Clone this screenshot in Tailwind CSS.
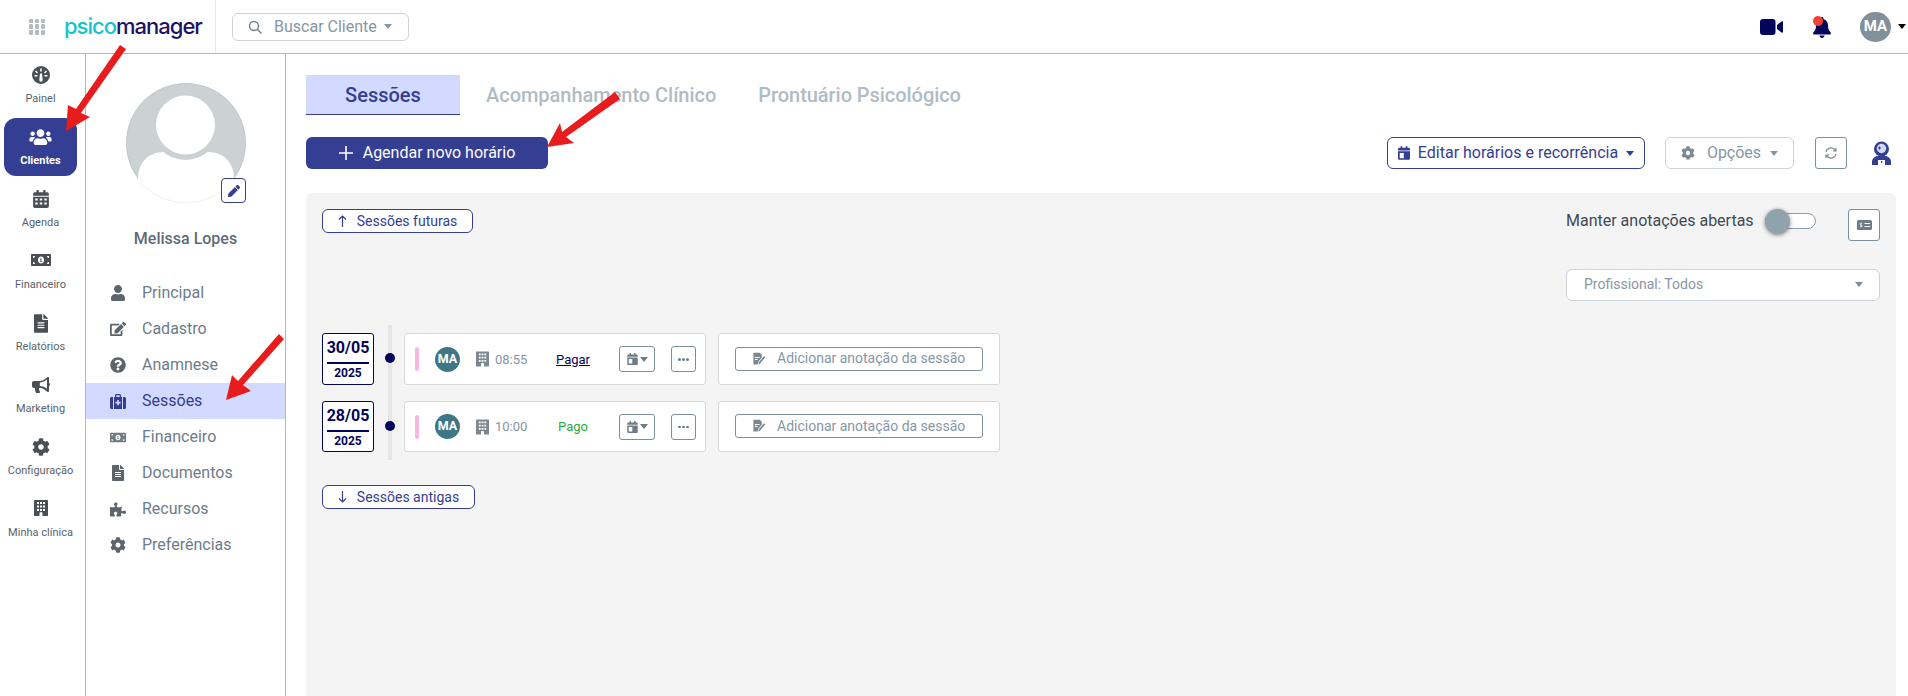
<!DOCTYPE html>
<html lang="pt-BR">
<head>
  <meta charset="UTF-8" />
  <meta name="viewport" content="width=device-width, initial-scale=1.0" />
  <title>PsicoManager</title>
  <script src="https://cdn.jsdelivr.net/npm/@tailwindcss/browser@4"></script>
</head>
<body class="bg-white font-['Roboto',sans-serif] overflow-hidden">

  <!-- Icones -->
  <svg class="hidden">
    <symbol id="i-user" viewBox="0 0 448 512"><path d="M224 256c70.7 0 128-57.3 128-128S294.7 0 224 0 96 57.3 96 128s57.3 128 128 128zm89.6 32h-16.7c-22.2 10.2-46.9 16-72.9 16s-50.6-5.8-72.9-16h-16.7C60.2 288 0 348.2 0 422.4V464c0 26.5 21.5 48 48 48h352c26.5 0 48-21.5 48-48v-41.6c0-74.2-60.2-134.4-134.4-134.4z"/></symbol>
    <symbol id="i-edit" viewBox="0 0 576 512"><path d="M402.6 83.2l90.2 90.2c3.8 3.8 3.8 10 0 13.8L274.4 405.6l-92.8 10.3c-12.4 1.4-22.9-9.1-21.5-21.5l10.3-92.8L388.8 83.2c3.8-3.8 10-3.8 13.8 0zm162-22.9l-48.8-48.8c-15.2-15.2-39.9-15.2-55.2 0l-35.4 35.4c-3.8 3.8-3.8 10 0 13.8l90.2 90.2c3.8 3.8 10 3.8 13.8 0l35.4-35.4c15.2-15.3 15.2-40 0-55.2zM384 346.2V448H64V128h229.8c3.2 0 6.2-1.3 8.5-3.5l40-40c7.6-7.6 2.2-20.5-8.5-20.5H48C21.5 64 0 85.5 0 112v352c0 26.5 21.5 48 48 48h352c26.5 0 48-21.5 48-48V306.2c0-10.7-12.9-16-20.5-8.5l-40 40c-2.2 2.3-3.5 5.3-3.5 8.5z"/></symbol>
    <symbol id="i-question" viewBox="0 0 512 512"><path d="M504 256c0 136.997-111.043 248-248 248S8 392.997 8 256C8 119.083 119.043 8 256 8s248 111.083 248 248zM262.655 90c-54.497 0-89.255 22.957-116.549 63.758-3.536 5.286-2.353 12.415 2.715 16.258l34.699 26.31c5.205 3.947 12.621 3.008 16.665-2.122 17.864-22.658 30.113-35.797 57.303-35.797 20.429 0 45.698 13.148 45.698 32.958 0 14.976-12.363 22.667-32.534 33.976C247.128 238.528 216 254.941 216 296v4c0 6.627 5.373 12 12 12h56c6.627 0 12-5.373 12-12v-1.333c0-28.462 83.186-29.647 83.186-106.667 0-58.002-60.165-102-116.531-102zM256 338c-25.365 0-46 20.635-46 46 0 25.364 20.635 46 46 46s46-20.636 46-46c0-25.365-20.635-46-46-46z"/></symbol>
    <symbol id="i-cog" viewBox="0 0 512 512"><path d="M487.4 315.7l-42.6-24.6c4.3-23.2 4.3-47 0-70.2l42.6-24.6c4.9-2.8 7.1-8.6 5.5-14-11.1-35.6-30-67.8-54.7-94.6-3.8-4.1-10-5.1-14.8-2.3L380.8 110c-17.9-15.4-38.5-27.3-60.8-35.1V25.8c0-5.6-3.9-10.5-9.4-11.7-36.7-8.2-74.3-7.8-109.2 0-5.5 1.2-9.4 6.1-9.4 11.7V75c-22.2 7.9-42.8 19.8-60.8 35.1L88.7 85.5c-4.9-2.8-11-1.9-14.8 2.3-24.7 26.7-43.6 58.9-54.7 94.6-1.7 5.4.6 11.2 5.5 14L67.3 221c-4.3 23.2-4.3 47 0 70.2l-42.6 24.6c-4.9 2.8-7.1 8.6-5.5 14 11.1 35.6 30 67.8 54.7 94.6 3.8 4.1 10 5.1 14.8 2.3l42.6-24.6c17.9 15.4 38.5 27.3 60.8 35.1v49.2c0 5.6 3.9 10.5 9.4 11.7 36.7 8.2 74.3 7.8 109.2 0 5.5-1.2 9.4-6.1 9.4-11.7v-49.2c22.2-7.9 42.8-19.8 60.8-35.1l42.6 24.6c4.9 2.8 11 1.9 14.8-2.3 24.7-26.7 43.6-58.9 54.7-94.6 1.5-5.5-.7-11.3-5.6-14.1zM256 336c-44.1 0-80-35.9-80-80s35.9-80 80-80 80 35.9 80 80-35.9 80-80 80z"/></symbol>
    <symbol id="i-file" viewBox="0 0 384 512"><path d="M224 136V0H24C10.7 0 0 10.7 0 24v464c0 13.3 10.7 24 24 24h336c13.3 0 24-10.7 24-24V160H248c-13.2 0-24-10.8-24-24zm64 236c0 6.6-5.4 12-12 12H108c-6.6 0-12-5.4-12-12v-8c0-6.6 5.4-12 12-12h168c6.6 0 12 5.4 12 12v8zm0-64c0 6.6-5.4 12-12 12H108c-6.6 0-12-5.4-12-12v-8c0-6.6 5.4-12 12-12h168c6.6 0 12 5.4 12 12v8zm0-72v8c0 6.6-5.4 12-12 12H108c-6.6 0-12-5.4-12-12v-8c0-6.6 5.4-12 12-12h168c6.6 0 12 5.4 12 12zm96-114.1v6.1H256V0h6.1c6.4 0 12.5 2.5 17 7l97.9 98c4.5 4.5 7 10.6 7 16.9z"/></symbol>
    <symbol id="i-pencil" viewBox="0 0 512 512"><path d="M497.9 142.1l-46.1 46.1c-4.7 4.7-12.3 4.7-17 0l-111-111c-4.7-4.7-4.7-12.3 0-17l46.1-46.1c18.7-18.7 49.1-18.7 67.9 0l60.1 60.1c18.8 18.7 18.8 49.1 0 67.9zM284.2 99.8L21.6 362.4.4 483.9c-2.9 16.4 11.4 30.6 27.8 27.8l121.5-21.3 262.6-262.6c4.7-4.7 4.7-12.3 0-17l-111-111c-4.8-4.7-12.4-4.7-17.1 0z"/></symbol>
    <symbol id="i-puzzle" viewBox="0 0 576 512"><path d="M519.442 288.651c-41.519 0-59.5 31.593-82.058 31.593C377.409 320.244 432 144 432 144s-196.288 80-196.288-3.297c0-35.827 36.288-46.25 36.288-85.985C272 19.216 243.885 0 210.539 0c-34.654 0-66.366 18.891-66.366 56.346 0 41.364 31.711 59.277 31.711 81.75C175.885 207.719 0 166.758 0 166.758v333.237s178.635 41.047 178.635-28.662c0-22.473-40-40.107-40-81.471 0-37.456 29.25-56.346 63.577-56.346 33.673 0 61.788 19.216 61.788 54.717 0 39.735-36.288 50.158-36.288 85.985 0 60.803 129.675 25.73 181.23 25.73 0 0-34.725-120.101 25.827-120.101 35.962 0 46.423 36.152 86.308 36.152C556.712 416 576 387.99 576 354.443c0-34.199-18.962-65.792-56.558-65.792z"/></symbol>
    <symbol id="i-money" viewBox="0 0 640 512"><path fill-rule="evenodd" d="M32 64h576c18 0 32 14 32 32v320c0 18-14 32-32 32H32c-18 0-32-14-32-32V96c0-18 14-32 32-32zm32 64v64c35 0 64-29 64-64zm0 192v64h64c0-35-29-64-64-64zm512-192h-64c0 35 29 64 64 64zm0 256v-64c-35 0-64 29-64 64zM320 144c-56 0-100 50-100 112s44 112 100 112 100-50 100-112-44-112-100-112zm-24 60h38v84h20v24h-68v-24h20v-48l-10 8-14-18z"/></symbol>
    <symbol id="i-calendar" viewBox="0 0 448 512"><path fill-rule="evenodd" d="M112 0h32c9 0 16 7 16 16v48h128V16c0-9 7-16 16-16h32c9 0 16 7 16 16v48h48c26 0 48 22 48 48v48H0v-48c0-26 22-48 48-48h48V16c0-9 7-16 16-16zM0 192h448v272c0 26-22 48-48 48H48c-26 0-48-22-48-48zm64 64v192h152V256z"/></symbol>
    <symbol id="i-calendar-grid" viewBox="0 0 448 512"><path fill-rule="evenodd" d="M112 0h32c9 0 16 7 16 16v48h128V16c0-9 7-16 16-16h32c9 0 16 7 16 16v48h48c26 0 48 22 48 48v48H0v-48c0-26 22-48 48-48h48V16c0-9 7-16 16-16zM0 192h448v272c0 26-22 48-48 48H48c-26 0-48-22-48-48zm60 50v60h70v-60zm129 0v60h70v-60zm129 0v60h70v-60zM60 352v60h70v-60zm129 0v60h70v-60zm129 0v60h70v-60z"/></symbol>
    <symbol id="i-building" viewBox="0 0 448 512"><path fill-rule="evenodd" d="M24 0h400c13 0 24 11 24 24v488H272v-96c0-13-11-24-24-24h-48c-13 0-24 11-24 24v96H0V24C0 11 11 0 24 0zm72 64v64h64V64zm96 0v64h64V64zm96 0v64h64V64zM96 176v64h64v-64zm96 0v64h64v-64zm96 0v64h64v-64zM96 288v64h64v-64zm192 0v64h64v-64zm-96 0v64h64v-64z"/></symbol>
    <symbol id="i-bullhorn" viewBox="0 0 576 512"><path d="M576 240c0-24-13-44-32-55V32c0-9-7-32-32-32-7 0-14 2-20 7l-85 68c-43 34-96 53-151 53H64c-35 0-64 29-64 64v96c0 35 29 64 64 64h34c-2 10-2 21-2 32 0 40 9 78 26 112 5 11 17 16 29 16h74c26 0 42-28 26-49-16-22-26-49-26-79 0-11 2-21 5-32h26c55 0 108 19 151 53l85 68c6 5 13 7 20 7 25 0 32-23 32-32V295c19-11 32-31 32-55zm-96 141l-33-27c-56-44-126-69-197-69V176c71 0 141-25 197-69l33-27z"/></symbol>
    <symbol id="i-users" viewBox="0 0 640 512"><path d="M96 224c35 0 64-29 64-64s-29-64-64-64-64 29-64 64 29 64 64 64zm448 0c35 0 64-29 64-64s-29-64-64-64-64 29-64 64 29 64 64 64zm32 32h-64c-18 0-34 7-45 19 40 22 69 62 75 109h66c18 0 32-14 32-32v-32c0-35-29-64-64-64zm-256 0c62 0 112-50 112-112S382 32 320 32 208 82 208 144s50 112 112 112zm77 32h-8c-21 10-44 16-69 16s-48-6-69-16h-8c-64 0-115 52-115 115v29c0 27 21 48 48 48h288c27 0 48-21 48-48v-29c0-63-51-115-115-115zm-224-13c-11-12-27-19-45-19H64c-35 0-64 29-64 64v32c0 18 14 32 32 32h66c6-47 35-87 75-109z"/></symbol>
    <symbol id="i-note" viewBox="0 0 20 20"><path fill-rule="evenodd" d="M2 1h9l3 3v4l-5 6-1 4H2zm2 6v1.5h7V7zm0 3v1.5h4V10z"/><path d="M17 6l2 1.500-7 8.500-3 2 .8-3.500z"/></symbol>
  </svg>

  <!-- Header -->
  <header class="flex items-center h-[54px] border-b border-[#aeb8c2]">
    <div class="flex items-center h-full w-[216px] border-r border-[#e6e8ea] pl-[29px]">
      <div class="grid grid-cols-3 gap-[1.500px] w-4 h-4 shrink-0">
        <span class="bg-[#b4bcc2] rounded-[1px]"></span><span class="bg-[#b4bcc2] rounded-[1px]"></span><span class="bg-[#b4bcc2] rounded-[1px]"></span>
        <span class="bg-[#b4bcc2] rounded-[1px]"></span><span class="bg-[#b4bcc2] rounded-[1px]"></span><span class="bg-[#b4bcc2] rounded-[1px]"></span>
        <span class="bg-[#b4bcc2] rounded-[1px]"></span><span class="bg-[#b4bcc2] rounded-[1px]"></span><span class="bg-[#b4bcc2] rounded-[1px]"></span>
      </div>
      <div class="ml-[19px] font-['Inter',sans-serif] font-medium text-[22px] leading-none tracking-[-1px] -mt-[2px] whitespace-nowrap"><span class="text-[#12c4cf]">psico</span><span class="text-[#1b1464]">manager</span></div>
    </div>
    <div class="flex items-center ml-4 w-[177px] h-7 border border-[#cdd3d8] rounded-md pl-[15px] text-[#8796a5]">
      <svg class="w-[14px] h-[14px]" viewBox="0 0 14 14" fill="none" stroke="#75818c" stroke-width="1.500"><circle cx="6" cy="6" r="4.500"/><path d="M9.500 9.500L13.500 13.500"/></svg>
      <span class="ml-3 text-[16px]">Buscar Cliente</span>
      <span class="ml-[7px] w-0 h-0 border-x-[4px] border-x-transparent border-t-[5px] border-t-[#8796a5]"></span>
    </div>
    <div class="flex items-center ml-auto">
      <svg class="w-[23px] h-[16px] text-[#03055b]" viewBox="0 0 23 16" fill="currentColor"><rect width="15.500" height="16" rx="3"/><path d="M17 6l4.500-3.500c.7-.5 1.500 0 1.500.7v9.600c0 .7-.8 1.200-1.500.7L17 10z"/></svg>
      <div class="relative ml-[30px] w-[18px] h-[21px] mt-[1px]">
        <svg class="w-[18px] h-[21px] text-[#03055b]" viewBox="0 0 18 21" fill="currentColor"><path d="M9 0c1 0 1.500.7 1.500 1.500v.7c3 .7 4.500 3.300 4.500 6 0 4 1 5.500 2.500 7 .8.800.4 2.300-.8 2.300H1.300C.1 17.500-.3 16 .5 15.200 2 13.700 3 12.200 3 8.200c0-2.700 1.500-5.300 4.500-6v-.7C7.500.7 8 0 9 0zM6.500 18.500h5C11.500 20 10.300 21 9 21s-2.500-1-2.500-2.500z"/></svg>
        <span class="absolute -left-0 -top-[1px] w-[10px] h-[10px] rounded-full bg-[#f44336]"></span>
      </div>
      <div class="ml-[29px] w-[31px] h-[30px] rounded-full bg-[#82909a] text-white text-[15px] font-bold flex items-center justify-center">MA</div>
      <span class="ml-[7px] mr-[2px] w-0 h-0 border-x-[4.500px] border-x-transparent border-t-[5px] border-t-black"></span>
    </div>
  </header>

  <div class="flex h-[642px]">

    <!-- Menu principal -->
    <nav class="w-[86px] shrink-0 border-r border-[#aeb8c2] pr-1 text-[#59636d] text-[11px]">
      <a class="flex flex-col items-center h-[64px] pt-3">
        <svg class="w-[18px] h-[18px] text-[#4a4f55]" viewBox="0 0 18 18" fill="currentColor"><path fill-rule="evenodd" d="M9 0a9 9 0 1 1 0 18A9 9 0 0 1 9 0zm-.8 2.500v3h1.600v-3zM4 4.500L3 5.500l2 2 1-1zm10 0l-2 2 1 1 2-2zM2.500 9v1.600h3V9zm10 0v1.600h3V9zM8 7.500L7.300 14a1.700 1.700 0 1 0 3.400 0L10 7.500z"/></svg>
        <span class="mt-[6px] leading-[18px]">Painel</span>
      </a>
      <a class="flex flex-col items-center mx-1 h-[58px] pt-[10px] rounded-xl bg-[#343e92] text-white font-bold">
        <svg class="w-[23px] h-[18px]" viewBox="0 0 640 512" fill="currentColor"><use href="#i-users"/></svg>
        <span class="mt-[6px] leading-[18px]">Clientes</span>
      </a>
      <a class="flex flex-col items-center h-[62px] pt-[14px]">
        <svg class="w-4 h-[18px] text-[#4a4f55]" fill="currentColor"><use href="#i-calendar-grid"/></svg>
        <span class="mt-[6px] leading-[18px]">Agenda</span>
      </a>
      <a class="flex flex-col items-center h-[62px] pt-[14px]">
        <svg class="w-5 h-4 text-[#4a4f55]" fill="currentColor"><use href="#i-money"/></svg>
        <span class="mt-2 leading-[18px]">Financeiro</span>
      </a>
      <a class="flex flex-col items-center h-[61px] pt-[14px]">
        <svg class="w-[14px] h-[19px] text-[#4a4f55]" fill="currentColor"><use href="#i-file"/></svg>
        <span class="mt-[5px] leading-[18px]">Relatórios</span>
      </a>
      <a class="flex flex-col items-center h-[62px] pt-[15px]">
        <svg class="w-[18px] h-[18px] text-[#4a4f55]" fill="currentColor"><use href="#i-bullhorn"/></svg>
        <span class="mt-[6px] leading-[18px]">Marketing</span>
      </a>
      <a class="flex flex-col items-center h-[62px] pt-[15px]">
        <svg class="w-[18px] h-[18px] text-[#4a4f55]" fill="currentColor"><use href="#i-cog"/></svg>
        <span class="mt-[6px] leading-[18px]">Configuração</span>
      </a>
      <a class="flex flex-col items-center h-[62px] pt-[14px]">
        <svg class="w-[14px] h-[18px] text-[#4a4f55]" fill="currentColor"><use href="#i-building"/></svg>
        <span class="mt-[7px] leading-[18px]">Minha clínica</span>
      </a>
    </nav>

    <!-- Cliente -->
    <aside class="w-[200px] shrink-0 border-r border-[#aeb8c2]">
      <svg class="block mx-auto mt-[29px]" width="120" height="120" viewBox="0 0 120 120">
        <clipPath id="foto"><circle cx="60" cy="60" r="60"/></clipPath>
        <g clip-path="url(#foto)">
          <rect width="120" height="120" fill="#ccd1d4"/>
          <path d="M12 96C12 80 22 69 38 69H82C98 69 108 80 108 96V120H12Z" fill="#fff"/>
          <circle cx="59.500" cy="42" r="35" fill="#ccd1d4"/>
          <circle cx="59.500" cy="42" r="29.500" fill="#fff"/>
        </g>
        <circle cx="60" cy="60" r="59.500" fill="none" stroke="#000" stroke-opacity="0.04"/>
      </svg>
      <div class="relative h-0">
        <button class="absolute left-[135px] -top-[25px] w-[25px] h-[25px] bg-white border border-[#343e92] rounded flex items-center justify-center">
          <svg class="w-3 h-3 text-[#343e92]" fill="currentColor"><use href="#i-pencil"/></svg>
        </button>
      </div>
      <p class="mt-[26px] text-center text-[16px] leading-5 font-medium text-[#5f6b76]">Melissa Lopes</p>
      <ul class="mt-[26px] text-[16px] text-[#6d7c8c]">
        <li class="flex items-center h-9 pl-[24px]"><span class="w-4 flex justify-center"><svg class="w-4 h-4 text-[#5c646c]" fill="currentColor"><use href="#i-user"/></svg></span><span class="ml-[16px]">Principal</span></li>
        <li class="flex items-center h-9 pl-[24px]"><span class="w-4 flex justify-center"><svg class="w-4 h-4 text-[#5c646c] shrink-0" fill="currentColor"><use href="#i-edit"/></svg></span><span class="ml-[16px]">Cadastro</span></li>
        <li class="flex items-center h-9 pl-[24px]"><span class="w-4 flex justify-center"><svg class="w-4 h-4 text-[#5c646c]" fill="currentColor"><use href="#i-question"/></svg></span><span class="ml-[16px]">Anamnese</span></li>
        <li class="flex items-center h-9 pl-[24px] bg-[#d3daff] text-[#343e92]"><span class="w-4 flex justify-center"><svg class="w-4 h-[15px] text-[#343e92]" viewBox="0 0 16 15" fill="currentColor"><path fill-rule="evenodd" d="M5 3V1.500C5 .7 5.700 0 6.500 0h3c.8 0 1.500.7 1.500 1.500V3h1v12H4V3zm1.300 0h3.400V1.300H6.300zM7.200 6v1.800H5.400v1.600h1.800v1.800h1.600V9.400h1.800V7.800H8.800V6zM0 4.500C0 3.700.7 3 1.500 3H3v12H1.500C.7 15 0 14.300 0 13.500zM13 3h1.500c.8 0 1.500.7 1.500 1.500v9c0 .8-.7 1.500-1.500 1.500H13z"/></svg></span><span class="ml-[16px]">Sessões</span></li>
        <li class="flex items-center h-9 pl-[24px]"><span class="w-4 flex justify-center"><svg class="w-4 h-[13px] text-[#727a82]" fill="currentColor"><use href="#i-money"/></svg></span><span class="ml-[16px]">Financeiro</span></li>
        <li class="flex items-center h-9 pl-[24px]"><span class="w-4 flex justify-center"><svg class="w-3 h-4 text-[#5c646c]" fill="currentColor"><use href="#i-file"/></svg></span><span class="ml-[16px]">Documentos</span></li>
        <li class="flex items-center h-9 pl-[24px]"><span class="w-4 flex justify-center"><svg class="w-4 h-[15px] text-[#5c646c]" fill="currentColor"><use href="#i-puzzle"/></svg></span><span class="ml-[16px]">Recursos</span></li>
        <li class="flex items-center h-9 pl-[24px]"><span class="w-4 flex justify-center"><svg class="w-4 h-4 text-[#5c646c]" fill="currentColor"><use href="#i-cog"/></svg></span><span class="ml-[16px]">Preferências</span></li>
      </ul>
    </aside>

    <!-- Conteudo -->
    <main class="flex-1 min-w-0 pl-5 pr-3 pt-[21px]">
      <div class="flex items-center h-10 text-[20px] font-medium text-[#b0bcc4]">
        <div class="w-[154px] h-10 flex items-center justify-center bg-[#d3daff] border-b border-[#343e92] text-[#343e92]">Sessões</div>
        <div class="ml-[26px] tracking-[-0.03px]">Acompanhamento Clínico</div>
        <div class="ml-[42px] tracking-[-0.05px]">Prontuário Psicológico</div>
      </div>

      <div class="flex items-center mt-[22px] h-8">
        <button class="flex items-center justify-center w-[242px] h-8 rounded-md bg-[#343e92] text-white text-[16px]">
          <svg class="w-[14px] h-[14px]" viewBox="0 0 14 14" stroke="currentColor" stroke-width="1.600"><path d="M7 0v14M0 7h14"/></svg>
          <span class="ml-[10px]">Agendar novo horário</span>
        </button>
        <button class="ml-auto flex items-center justify-center w-[258px] h-8 rounded-md bg-white border border-[#343e92] text-[#343e92] text-[16px]">
          <svg class="w-3 h-[14px]" fill="currentColor"><use href="#i-calendar"/></svg>
          <span class="ml-2">Editar horários e recorrência</span>
          <span class="ml-2 w-0 h-0 border-x-[4.500px] border-x-transparent border-t-[5px] border-t-[#343e92]"></span>
        </button>
        <button class="ml-5 flex items-center justify-center w-[129px] h-8 rounded-md bg-white border border-[#cdd3d8] text-[#8796a5] text-[16px]">
          <svg class="w-[14px] h-[14px] text-[#7d8a93]" fill="currentColor"><use href="#i-cog"/></svg>
          <span class="ml-3">Opções</span>
          <span class="ml-[9px] w-0 h-0 border-x-[4.500px] border-x-transparent border-t-[5px] border-t-[#8796a5]"></span>
        </button>
        <button class="ml-[21px] flex items-center justify-center w-8 h-8 rounded-[3px] bg-white border border-[#7d8f9c]">
          <svg class="w-3 h-3" viewBox="0 0 12 12" fill="none" stroke="#7d8a93" stroke-width="1.200"><path d="M1 5a5 5 0 0 1 8.500-2.500L11 4M11 1v3H8M11 7a5 5 0 0 1-8.500 2.500L1 8M1 11V8h3"/></svg>
        </button>
        <svg class="ml-6 mr-1 w-[21px] h-6" viewBox="0 0 21 24">
          <circle cx="10.500" cy="8" r="7.500" fill="#343e92"/>
          <circle cx="10.500" cy="7.500" r="4.700" fill="#d3d8f2"/>
          <path d="M8.500 5.500v3M7 7h3" stroke="#343e92"/>
          <path d="M1 24v-3.500C1 17.500 4 15 7 15h7c3 0 6 2.500 6 5.500V24z" fill="#343e92"/>
          <rect x="7" y="19" width="7" height="5" fill="#fff"/>
          <rect x="10" y="20" width="1.200" height="2" fill="#343e92"/>
        </svg>
      </div>

      <!-- Sessoes -->
      <section class="mt-6 h-[503px] bg-[#f4f4f4] rounded-t-md p-4">
        <div class="flex justify-between items-start">
          <button class="flex items-center justify-center w-[151px] h-6 rounded-md bg-white border border-[#343e92] text-[#343e92] text-[14px]">
            <svg class="w-[9px] h-3" viewBox="0 0 9 12" fill="none" stroke="currentColor" stroke-width="1.200"><path d="M4.500 12V1M1 4.500L4.500 1 8 4.500"/></svg>
            <span class="ml-[10px]">Sessões futuras</span>
          </button>
          <div class="w-[314px]">
            <div class="flex items-center h-8">
              <div class="flex items-center mb-2">
                <span class="text-[16px] text-[#3f4a55]">Manter anotações abertas</span>
                <div class="relative ml-[11px] w-[51px] h-4 rounded-full border border-[#8ba0ae] bg-white">
                  <span class="absolute -left-[1px] -top-[5px] w-[25px] h-[25px] rounded-full bg-[#8fa3ad] shadow-[0_1px_4px_rgba(0,0,0,0.5)]"></span>
                </div>
              </div>
              <button class="ml-auto flex items-center justify-center w-8 h-8 rounded-[3px] bg-white border border-[#7d8f9c]">
                <svg class="w-[15px] h-[10px]" viewBox="0 0 15 10"><rect width="15" height="10" rx="1.500" fill="#6f7c87"/><path d="M7.500 3.500h5.500M7.500 6.500h5.500" stroke="#fff"/><path d="M4 2.500v5M5 3.700C4.500 3.200 3 3.200 3 4.200s2 .7 2 1.700-1.500 1-2 .4" stroke="#fff" stroke-width=".7" fill="none"/></svg>
              </button>
            </div>
            <div class="flex items-center justify-between mt-7 h-8 rounded-md bg-white border border-[#cdd3d8] pl-[17px] pr-4 pb-[1px] text-[14px] text-[#8796a5]">
              <span>Profissional: Todos</span>
              <span class="w-0 h-0 border-x-[4.500px] border-x-transparent border-t-[5px] border-t-[#7d8a93]"></span>
            </div>
          </div>
        </div>

        <div class="flex mt-6 h-[135px]">
          <div class="flex flex-col gap-4 py-2 w-[52px] shrink-0">
            <div class="h-[52px] bg-white border border-[#03055b] rounded-[3px] flex flex-col items-center text-[#03055b] font-bold">
              <span class="text-[16px] leading-[28px]">30/05</span>
              <span class="w-[42px] border-t-2 border-[#03055b]"></span>
              <span class="text-[12px] leading-[19px]">2025</span>
            </div>
            <div class="h-[52px] bg-white border border-[#03055b] rounded-[3px] flex flex-col items-center text-[#03055b] font-bold">
              <span class="text-[16px] leading-[28px]">28/05</span>
              <span class="w-[42px] border-t-2 border-[#03055b]"></span>
              <span class="text-[12px] leading-[19px]">2025</span>
            </div>
          </div>
          <div class="relative ml-[14px] mr-3 w-1 bg-[#e6e6e6]">
            <span class="absolute -left-[3px] top-7 w-[10px] h-[10px] rounded-full bg-[#03055b]"></span>
            <span class="absolute -left-[3px] top-24 w-[10px] h-[10px] rounded-full bg-[#03055b]"></span>
          </div>
          <div class="flex flex-col gap-4 py-2">
            <div class="flex gap-3 h-[52px]">
              <div class="flex items-center w-[302px] bg-white border border-[#d5d9dc] rounded-[3px] pl-[10px] pt-[1px]">
                <span class="w-1 h-6 rounded-sm bg-[#f7b7e4]"></span>
                <span class="ml-4 w-[25px] h-[25px] rounded-full bg-[#3f7686] text-white text-[12.500px] font-bold flex items-center justify-center">MA</span>
                <svg class="ml-4 w-[13px] h-4 text-[#7c8790]" fill="currentColor"><use href="#i-building"/></svg>
                <span class="ml-[6px] w-[33px] text-[13px] text-[#8796a5]">08:55</span>
                <a class="w-[34px] ml-7 text-[13px] text-[#03055b] underline">Pagar</a>
                <button class="ml-[29px] flex items-center justify-center w-9 h-[26px] bg-white border border-[#7d8f9c] rounded-[3px]">
                  <svg class="w-[11px] h-3 text-[#6f7c87]" fill="currentColor"><use href="#i-calendar"/></svg>
                  <span class="ml-[2px] w-0 h-0 border-x-[4.500px] border-x-transparent border-t-[5px] border-t-[#6f7c87]"></span>
                </button>
                <button class="ml-4 flex items-center justify-center gap-[1.500px] w-[25px] h-[26px] bg-white border border-[#7d8f9c] rounded-[3px]">
                  <span class="w-[2.500px] h-[2.500px] rounded-full bg-[#6f7c87]"></span><span class="w-[2.500px] h-[2.500px] rounded-full bg-[#6f7c87]"></span><span class="w-[2.500px] h-[2.500px] rounded-full bg-[#6f7c87]"></span>
                </button>
              </div>
              <div class="flex items-center w-[282px] bg-white border border-[#d5d9dc] rounded-[3px] pl-4">
                <button class="flex items-center w-[248px] h-6 border border-[#7d8f9c] rounded-[3px] pl-4 text-[14px] text-[#8796a5]">
                  <svg class="w-[14px] h-[14px] text-[#7c8790]" fill="currentColor"><use href="#i-note"/></svg>
                  <span class="ml-[11px]">Adicionar anotação da sessão</span>
                </button>
              </div>
            </div>
            <div class="flex gap-3 h-[52px]">
              <div class="flex items-center w-[302px] bg-white border border-[#d5d9dc] rounded-[3px] pl-[10px] pt-[1px]">
                <span class="w-1 h-6 rounded-sm bg-[#f7b7e4]"></span>
                <span class="ml-4 w-[25px] h-[25px] rounded-full bg-[#3f7686] text-white text-[12.500px] font-bold flex items-center justify-center">MA</span>
                <svg class="ml-4 w-[13px] h-4 text-[#7c8790]" fill="currentColor"><use href="#i-building"/></svg>
                <span class="ml-[6px] w-[33px] text-[13px] text-[#8796a5]">10:00</span>
                <span class="w-[34px] ml-7 text-center text-[13px] text-[#28a745]">Pago</span>
                <button class="ml-[29px] flex items-center justify-center w-9 h-[26px] bg-white border border-[#7d8f9c] rounded-[3px]">
                  <svg class="w-[11px] h-3 text-[#6f7c87]" fill="currentColor"><use href="#i-calendar"/></svg>
                  <span class="ml-[2px] w-0 h-0 border-x-[4.500px] border-x-transparent border-t-[5px] border-t-[#6f7c87]"></span>
                </button>
                <button class="ml-4 flex items-center justify-center gap-[1.500px] w-[25px] h-[26px] bg-white border border-[#7d8f9c] rounded-[3px]">
                  <span class="w-[2.500px] h-[2.500px] rounded-full bg-[#6f7c87]"></span><span class="w-[2.500px] h-[2.500px] rounded-full bg-[#6f7c87]"></span><span class="w-[2.500px] h-[2.500px] rounded-full bg-[#6f7c87]"></span>
                </button>
              </div>
              <div class="flex items-center w-[282px] bg-white border border-[#d5d9dc] rounded-[3px] pl-4">
                <button class="flex items-center w-[248px] h-6 border border-[#7d8f9c] rounded-[3px] pl-4 text-[14px] text-[#8796a5]">
                  <svg class="w-[14px] h-[14px] text-[#7c8790]" fill="currentColor"><use href="#i-note"/></svg>
                  <span class="ml-[11px]">Adicionar anotação da sessão</span>
                </button>
              </div>
            </div>
          </div>
        </div>

        <button class="flex items-center justify-center mt-[25px] w-[153px] h-6 rounded-md bg-white border border-[#343e92] text-[#343e92] text-[14px]">
          <svg class="w-[9px] h-3" viewBox="0 0 9 12" fill="none" stroke="currentColor" stroke-width="1.200"><path d="M4.500 0v11M1 7.500L4.500 11 8 7.500"/></svg>
          <span class="ml-[10px]">Sessões antigas</span>
        </button>
      </section>
    </main>
  </div>

  <!-- Setas vermelhas -->
  <svg class="absolute left-0 top-0 pointer-events-none" width="1908" height="696" fill="#e81c1c">
    <path d="M126 49L81 113 90 117 66 131 68 105 76 109 120 45z"/>
    <path d="M284 339L243 385 251 391 226 400 232 375 238 381 279 334z"/>
    <path d="M620 99L566 137 574 143 547 147 560 123 562 132 615 92z"/>
  </svg>

</body>
</html>
